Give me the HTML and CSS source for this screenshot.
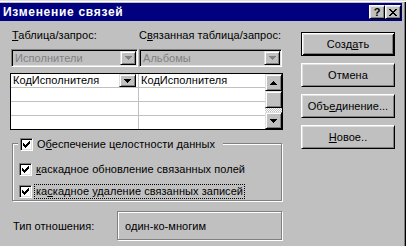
FILE: index.html
```html
<!DOCTYPE html>
<html lang="ru">
<head>
<meta charset="utf-8">
<title>Изменение связей</title>
<link rel="stylesheet" href="styles.css">
</head>
<body>
<div class="window">
  <div class="titlebar">
    <span class="title">Изменение связей</span>
    <div class="tbtns">
      <span class="tbtn help">?</span>
      <span class="tbtn close"><svg width="8" height="7" viewBox="0 0 8 7"><path d="M0 0h2v1H0zM6 0h2v1H6zM1 1h2v1H1zM5 1h2v1H5zM2 2h4v1H2zM3 3h2v1H3zM2 4h4v1H2zM1 5h2v1H1zM5 5h2v1H5zM0 6h2v1H0zM6 6h2v1H6z" fill="#000"/></svg></span>
    </div>
  </div>
  <div class="content">
    <div class="left">
      <div class="labels">
        <span class="lbl1"><u>Т</u>аблица/запрос:</span>
        <span class="lbl2">С<u>в</u>язанная таблица/запрос:</span>
      </div>
      <div class="combos">
        <div class="combo c1"><span class="ctext">Исполнители</span><span class="cbtn"><svg width="7" height="4" viewBox="0 0 7 4"><path d="M0 0h7v1H0zM1 1h5v1H1zM2 2h3v1H2zM3 3h1v1H3z" fill="#808080"/></svg></span></div>
        <div class="combo c2"><span class="ctext">Альбомы</span><span class="cbtn"><svg width="7" height="4" viewBox="0 0 7 4"><path d="M0 0h7v1H0zM1 1h5v1H1zM2 2h3v1H2zM3 3h1v1H3z" fill="#808080"/></svg></span></div>
      </div>
      <div class="grid">
        <div class="rows">
          <div class="row"><div class="cell col1"><span class="ctxt">КодИсполнителя</span><span class="dd"><svg width="7" height="4" viewBox="0 0 7 4"><path d="M0 0h7v1H0zM1 1h5v1H1zM2 2h3v1H2zM3 3h1v1H3z" fill="#000"/></svg></span></div><div class="cell col2"><span class="ctxt">КодИсполнителя</span></div></div>
          <div class="row"><div class="cell col1"></div><div class="cell col2"></div></div>
          <div class="row"><div class="cell col1"></div><div class="cell col2"></div></div>
          <div class="row"><div class="cell col1"></div><div class="cell col2"></div></div>
        </div>
        <div class="vscroll">
          <span class="sbtn"><svg width="7" height="4" viewBox="0 0 7 4"><path d="M3 0h1v1H3zM2 1h3v1H2zM1 2h5v1H1zM0 3h7v1H0z" fill="#000"/></svg></span>
          <span class="thumb"></span>
          <span class="track"></span>
          <span class="sbtn"><svg width="7" height="4" viewBox="0 0 7 4"><path d="M0 0h7v1H0zM1 1h5v1H1zM2 2h3v1H2zM3 3h1v1H3z" fill="#000"/></svg></span>
        </div>
      </div>
      <div class="group">
        <div class="chk legend"><span class="box"><svg width="7" height="7" viewBox="0 0 7 7"><path d="M0 2h1v3H0zM1 3h1v3H1zM2 4h1v3H2zM3 3h1v3H3zM4 2h1v3H4zM5 1h1v3H5zM6 0h1v3H6z" fill="#000"/></svg></span><span>О<u>б</u>еспечение целостности данных</span></div>
        <div class="chk r2"><span class="box"><svg width="7" height="7" viewBox="0 0 7 7"><path d="M0 2h1v3H0zM1 3h1v3H1zM2 4h1v3H2zM3 3h1v3H3zM4 2h1v3H4zM5 1h1v3H5zM6 0h1v3H6z" fill="#000"/></svg></span><span><u>к</u>аскадное обновление связанных полей</span></div>
        <div class="chk r3"><span class="box"><svg width="7" height="7" viewBox="0 0 7 7"><path d="M0 2h1v3H0zM1 3h1v3H1zM2 4h1v3H2zM3 3h1v3H3zM4 2h1v3H4zM5 1h1v3H5zM6 0h1v3H6z" fill="#000"/></svg></span><span class="focus">ка<u>с</u>кадное удаление связанных записей</span></div>
      </div>
      <div class="typerow">
        <span class="typelbl">Тип отношения:</span>
        <div class="field">один-ко-многим</div>
      </div>
    </div>
    <div class="right">
      <div class="btn default">Созд<u>а</u>ть</div>
      <div class="btn">Отмена</div>
      <div class="btn">Объ<u>е</u>динение...</div>
      <div class="btn"><span><u>Н</u>овое..</span></div>
    </div>
  </div>
</div>
</body>
</html>
```
FILE: styles.css
```css
* { box-sizing: border-box; }
html, body { margin: 0; padding: 0; }
body {
  width: 406px;
  height: 246px;
  overflow: hidden;
  background: #c0c0c0;
  font-family: "Liberation Sans", Arial, sans-serif;
  font-size: 11px;
  letter-spacing: 0.05px;
  color: #000;
}
u { text-underline-offset: 1px; }

.window {
  height: 246px;
  padding: 3px 4px 0 0;
  box-shadow: inset 0 1px 0 #dfdfdf, inset 0 2px 0 #fff, inset -1px 0 0 #000, inset -2px 0 0 #808080;
}

.titlebar {
  height: 18px;
  background: #000080;
  color: #fff;
  display: flex;
  align-items: center;
  padding-left: 3px;
}
.title { font-weight: bold; font-size: 12px; letter-spacing: 0.7px; }
.tbtns { margin-left: auto; margin-right: 1px; display: flex; }
.tbtn {
  width: 16px; height: 14px;
  background: #c0c0c0;
  color: #000;
  border: 1px solid; border-color: #fff #000 #000 #fff;
  box-shadow: inset 1px 1px 0 #dfdfdf, inset -1px -1px 0 #808080;
  display: flex; align-items: center; justify-content: center;
  font-weight: bold; font-size: 11px; line-height: 12px; letter-spacing: 0;
}

.content { display: flex; padding-left: 10px; }
.left { width: 273px; display: flex; flex-direction: column; }
.right {
  margin-left: 18px;
  margin-top: 11px;
  width: 94px;
  display: flex; flex-direction: column; gap: 7px;
}

.labels {
  display: grid; grid-template-columns: 129px 1fr;
  margin-top: 8px; height: 13px; line-height: 13px;
  white-space: nowrap;
}
.lbl1 { padding-left: 2px; }

.combos { display: flex; gap: 1px; margin-top: 7px; padding-left: 1px; }
.combo {
  height: 18px;
  display: flex; align-items: center;
  border: 1px solid; border-color: #808080 #fff #fff #808080;
  box-shadow: inset 1px 1px 0 #000, inset -1px -1px 0 #dfdfdf;
  padding: 1px;
  color: #808080;
}
.combo.c1 { width: 127px; }
.combo.c2 { width: 143px; }
.ctext { flex: 1; padding-left: 2px; line-height: 14px; }
.cbtn, .dd, .sbtn, .thumb {
  background: #c0c0c0;
  border: 1px solid; border-color: #dfdfdf #000 #000 #dfdfdf;
  box-shadow: inset 1px 1px 0 #fff, inset -1px -1px 0 #808080;
  display: flex; align-items: center; justify-content: center;
}
.cbtn { width: 16px; height: 14px; }

.grid {
  margin-top: 6px;
  height: 57px;
  border: 1px solid #000;
  background: #fff;
  display: flex;
}
.rows { flex: 1; display: flex; flex-direction: column; }
.row {
  display: grid; grid-template-columns: 128px 1fr;
  height: 14px;
  border-bottom: 1px solid #c0c0c0;
}
.row:last-child { border-bottom: 0; height: 13px; }
.cell { display: flex; align-items: center; line-height: 13px; min-width: 0; }
.cell.col1 { border-right: 1px solid #c0c0c0; }
.ctxt { flex: 1; padding-left: 2px; white-space: nowrap; overflow: hidden; }
.dd { width: 17px; height: 13px; margin-right: 2px; flex: none; }
.vscroll { width: 17px; display: flex; flex-direction: column; }
.sbtn, .thumb { height: 17px; }
.track {
  flex: 1;
  background: repeating-conic-gradient(#fff 0 25%, #c0c0c0 0 50%) 0 0 / 2px 2px;
}

.group {
  margin-top: 13px;
  margin-left: 2px;
  width: 270px;
  border: 1px solid #808080;
  box-shadow: 1px 1px 0 #fff, inset 1px 1px 0 #fff;
  padding: 0 0 2px 0;
  display: flex; flex-direction: column;
}
.chk { display: flex; align-items: center; gap: 4px; height: 13px; line-height: 13px; white-space: nowrap; }
.chk.legend {
  margin-top: -6px;
  margin-left: 5px;
  padding: 0 8px 0 2px;
  width: fit-content;
  background: #c0c0c0;
}
.chk.r2 { margin-top: 12px; padding-left: 6px; }
.chk.r3 { margin-top: 9px; padding-left: 6px; }
.box {
  width: 13px; height: 13px; flex: none;
  background: #fff;
  border: 1px solid; border-color: #808080 #fff #fff #808080;
  box-shadow: inset 1px 1px 0 #000, inset -1px -1px 0 #dfdfdf;
  display: flex; align-items: center; justify-content: center;
}
.focus { outline: 1px dotted #000; outline-offset: 0; padding: 0 1px; margin-left: -1px; }

.typerow { margin-top: 10px; display: flex; align-items: center; }
.typelbl { width: 107px; padding-left: 3px; white-space: nowrap; }
.field {
  width: 165px; height: 29px;
  border: 1px solid #808080;
  box-shadow: 1px 1px 0 #fff, inset 1px 1px 0 #fff;
  display: flex; align-items: center;
  padding-left: 7px;
}

.btn {
  height: 24px;
  display: flex; align-items: center; justify-content: center;
  border: 1px solid; border-color: #fff #000 #000 #fff;
  box-shadow: inset 1px 1px 0 #dfdfdf, inset -1px -1px 0 #808080;
  white-space: nowrap;
}
.btn.default {
  border-color: #000;
  box-shadow: inset 1px 1px 0 #fff, inset -1px -1px 0 #000, inset 2px 2px 0 #dfdfdf, inset -2px -2px 0 #808080;
}
```
